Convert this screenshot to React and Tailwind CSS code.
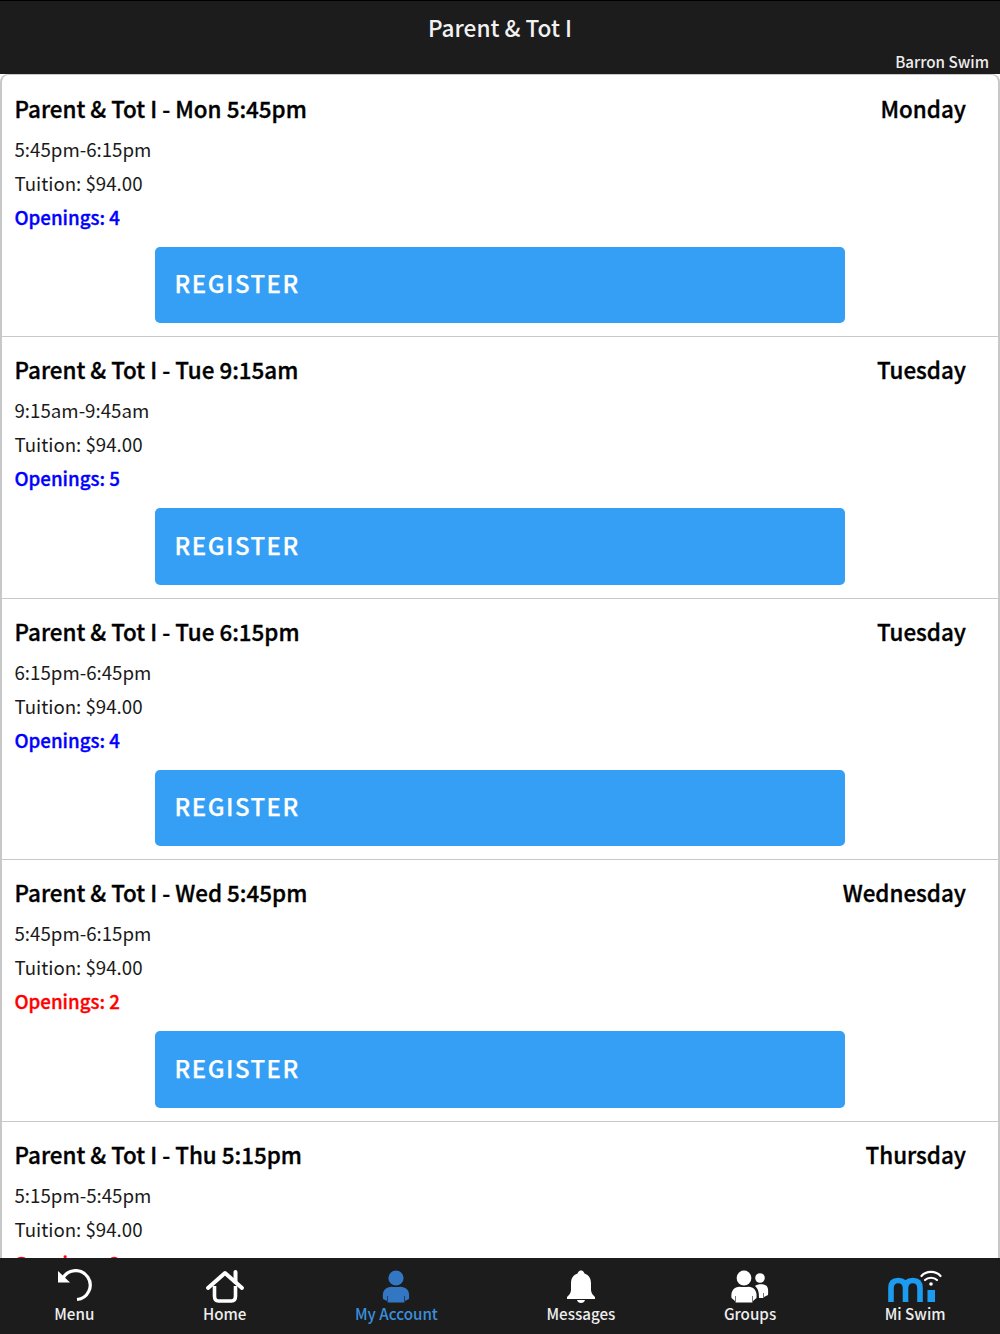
import React from "react";

const classes = [
  { title: "Parent & Tot I - Mon 5:45pm", day: "Monday", time: "5:45pm-6:15pm", openings: 4 },
  { title: "Parent & Tot I - Tue 9:15am", day: "Tuesday", time: "9:15am-9:45am", openings: 5 },
  { title: "Parent & Tot I - Tue 6:15pm", day: "Tuesday", time: "6:15pm-6:45pm", openings: 4 },
  { title: "Parent & Tot I - Wed 5:45pm", day: "Wednesday", time: "5:45pm-6:15pm", openings: 2 },
  { title: "Parent & Tot I - Thu 5:15pm", day: "Thursday", time: "5:15pm-5:45pm", openings: 2 },
];

function ClassRow({ item }) {
  return (
    <div className="h-[261.5px] shrink-0 border-b border-[#c8c8c8] pl-[12.5px] pr-[32px] pt-[15px]">
      <div className="flex justify-between text-[22.4px] leading-[34px] font-medium text-black [-webkit-text-stroke:0.35px_#000]">
        <span>{item.title}</span>
        <span>{item.day}</span>
      </div>
      <p className="mt-[7px] text-[18.7px] leading-[34px] text-[#1a1a1a]">{item.time}</p>
      <p className="text-[18.7px] leading-[34px] text-[#1a1a1a]">Tuition: $94.00</p>
      <p className={`text-[18.7px] leading-[34px] font-medium [-webkit-text-stroke:0.35px] ${item.openings <= 2 ? "text-[#ff0000]" : "text-[#0000ff]"}`}>
        Openings: {item.openings}
      </p>
      <div className="ml-[140.5px] mt-[13px] flex h-[76.5px] w-[690px] items-center rounded-[5px] bg-[#359ff5] pb-[3px] pl-[19.5px] text-[24px] font-medium tracking-[1.5px] text-white [-webkit-text-stroke:0.25px_#fff]">
        REGISTER
      </div>
    </div>
  );
}

function MenuIcon() {
  return (
    <svg width="36" height="34" viewBox="0 0 36 34" fill="none">
      <path d="M7 9 A14.5 14.5 0 1 1 21 30.5" stroke="#fff" strokeWidth="3.2" />
      <path d="M2 2 V13.5 H14 Z" fill="#fff" />
    </svg>
  );
}

function HomeIcon() {
  return (
    <svg width="40" height="34" viewBox="0 0 40 34" fill="none">
      <path d="M3 19 L20 4 L37 19" stroke="#fff" strokeWidth="4" strokeLinecap="round" strokeLinejoin="round" />
      <path d="M30.5 3 L30.5 13" stroke="#fff" strokeWidth="4" strokeLinecap="round" />
      <path d="M9.5 17 V27 C9.5 30.5 11 32 13.5 32 H26.5 C29 32 30.5 30.5 30.5 27 V17" stroke="#fff" strokeWidth="3.6" />
    </svg>
  );
}

function PersonIcon({ fill = "#fff" }) {
  return (
    <svg width="28" height="34" viewBox="0 0 28 34" fill={fill}>
      <circle cx="14" cy="9" r="7.6" />
      <path d="M1 30 C0.5 24 1 20.5 6 18.5 C9 17 11 18 14 18 C17 18 19 17 22 18.5 C27 20.5 27.5 24 27 30 L23 32 V27 H22.4 V33.5 H5.6 V27 H5 V32 Z" />
    </svg>
  );
}

function BellIcon() {
  return (
    <svg width="30" height="34" viewBox="0 0 30 34" fill="#fff">
      <path d="M15 1.5 C17 1.5 18 3 18.5 4.5 C23 6 25 9.5 25 14.5 V21 C25 24 27 26 29 28 V30 H1 V28 C3 26 5 24 5 21 V14.5 C5 9.5 7 6 11.5 4.5 C12 3 13 1.5 15 1.5 Z" />
      <path d="M11 31 H19 C18.5 33 17 34 15 34 C13 34 11.5 33 11 31 Z" />
    </svg>
  );
}

function GroupsIcon() {
  return (
    <svg width="38" height="34" viewBox="0 0 38 34" fill="#fff">
      <circle cx="13" cy="9" r="7.4" />
      <path d="M0.5 29 C0 24 1 20.5 5 18.5 C8 17 10 18 13 18 C16 18 18 17 21 18.5 C25 20.5 26 24 25.5 29 L22 32 V27 H21.4 V33.5 H4.6 V27 H4 V32 Z" />
      <circle cx="29" cy="9" r="4.8" />
      <path d="M24 17 C26 15 32 15 34 16 C37 17 37.5 20 37 26 L33 28 V24 H32.4 V29 H28 C28 24 27.5 20 24 17 Z" />
    </svg>
  );
}

function MiSwimIcon() {
  return (
    <svg width="54" height="34" viewBox="0 0 54 34" fill="none">
      <path d="M3 33 V19 C3 13 6.5 11.5 10.2 11.5 C14 11.5 17.5 13 17.5 19 V33 M17.5 19 C17.5 13 21 11.5 24.8 11.5 C28.5 11.5 32 13 32 19 V33" stroke="#1c9cf0" strokeWidth="5.6" />
      <rect x="39.5" y="21" width="7.5" height="12" fill="#1c9cf0" />
      <path d="M33.5 7 C38 1.5 48 1.5 52.5 7" stroke="#fff" strokeWidth="2.2" strokeLinecap="round" />
      <path d="M37 11 C40 8 46 8 49 11" stroke="#fff" strokeWidth="2.2" strokeLinecap="round" />
      <circle cx="43" cy="15" r="1.8" fill="#fff" />
    </svg>
  );
}

function Tab({ label, icon, active }) {
  return (
    <div className="flex flex-col items-center">
      <div className="flex h-[34px] items-end">{icon}</div>
      <span className={`-mt-[1px] text-[15.2px] leading-[22px] font-medium ${active ? "text-[#3a8fdc]" : "text-[#eeeeee]"}`}>
        {label}
      </span>
    </div>
  );
}

export default function App() {
  return (
    <div className="flex h-[1334px] w-[1000px] flex-col overflow-hidden bg-white font-['Noto_Sans_CJK_SC','Noto_Sans',sans-serif]">
      <div className="relative h-[74px] shrink-0 border-t border-black bg-[#1c1c1c] text-center">
        <p className="pt-[10px] text-[22.6px] leading-[34px] font-medium text-[#f2f2f2]">Parent &amp; Tot I</p>
        <span className="absolute right-[11px] bottom-[2px] text-[15.2px] leading-[22px] font-medium text-[#eeeeee]">Barron Swim</span>
      </div>

      <div className="flex min-h-0 flex-1 flex-col overflow-hidden rounded-t-[8px] border-x-2 border-t border-[#c8c8c8] pt-[0.5px]">
        {classes.map((item) => (
          <ClassRow key={item.title} item={item} />
        ))}
      </div>

      <div className="flex h-[76px] shrink-0 items-start justify-around bg-[#1c1c1c] pt-[11px]">
        <Tab label="Menu" icon={<MenuIcon />} />
        <Tab label="Home" icon={<HomeIcon />} />
        <Tab label="My Account" icon={<PersonIcon fill="#3276c4" />} active />
        <Tab label="Messages" icon={<BellIcon />} />
        <Tab label="Groups" icon={<GroupsIcon />} />
        <Tab label="Mi Swim" icon={<MiSwimIcon />} />
      </div>
    </div>
  );
}
